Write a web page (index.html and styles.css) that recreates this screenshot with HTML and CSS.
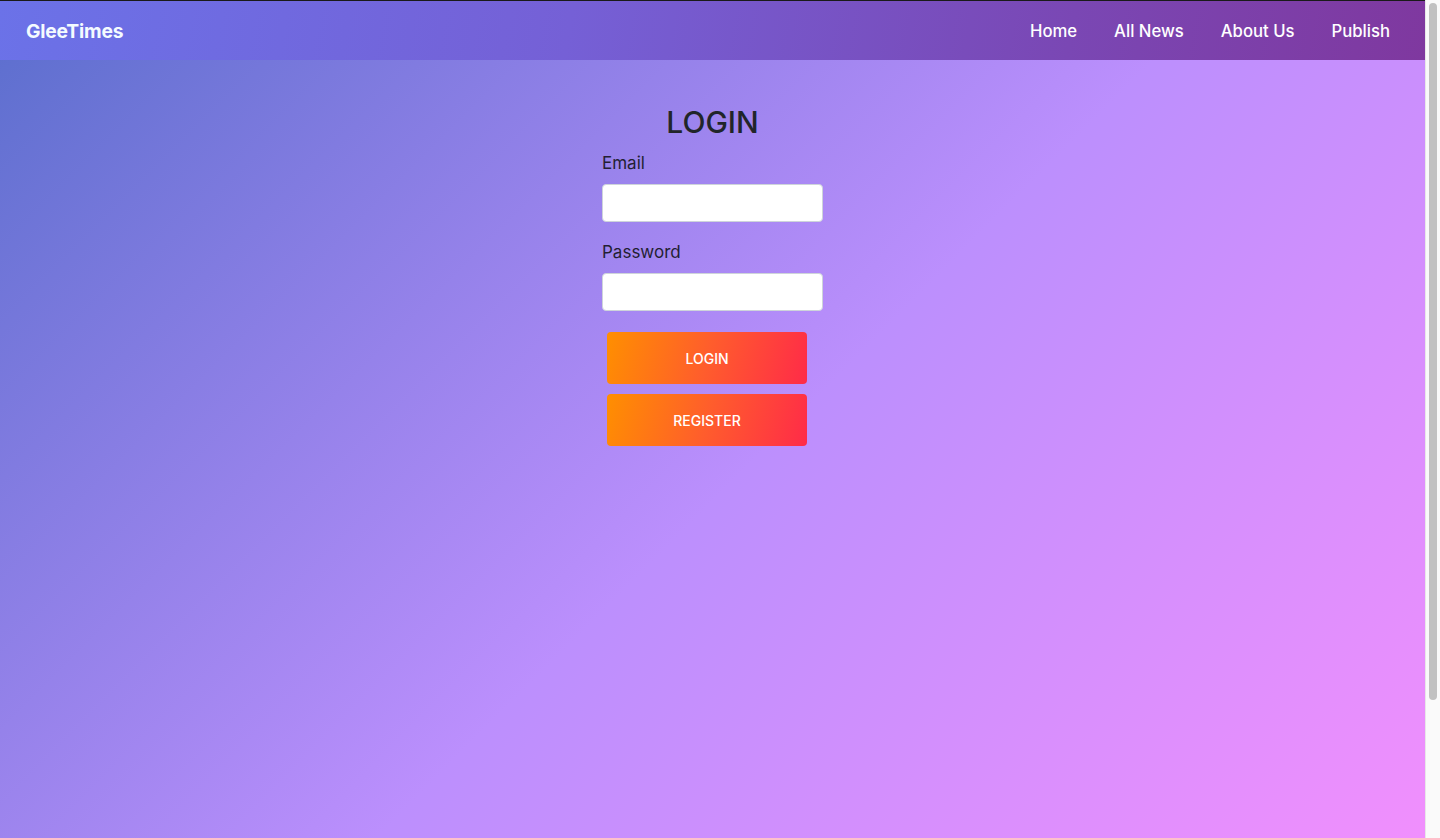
FILE: index.html
```html
<!DOCTYPE html>
<html lang="en">
<head>
<meta charset="utf-8">
<title>GleeTimes - Login</title>
<link rel="stylesheet" href="styles.css">
</head>
<body>
<div class="page">
  <nav class="navbar">
    <a class="brand" href="#">GleeTimes</a>
    <ul class="nav-links">
      <li><a href="#">Home</a></li>
      <li><a href="#">All News</a></li>
      <li><a href="#">About Us</a></li>
      <li><a href="#">Publish</a></li>
    </ul>
  </nav>
  <main class="login">
    <h1 class="login-title">LOGIN</h1>
    <form class="login-form">
      <label class="field-label" for="email">Email</label>
      <input class="field-input" id="email" type="email">
      <label class="field-label field-label-second" for="password">Password</label>
      <input class="field-input" id="password" type="password">
      <div class="actions">
        <button class="btn" type="button">LOGIN</button>
        <button class="btn" type="button">REGISTER</button>
      </div>
    </form>
  </main>
</div>
<div class="scrollbar" aria-hidden="true">
  <div class="scrollbar-thumb"></div>
</div>
</body>
</html>
```

FILE: styles.css
```css
html {
  margin: 0;
}

body {
  margin: 0;
  display: flex;
  align-items: flex-start;
  font-family: Inter, "Noto Sans", "Liberation Sans", sans-serif;
  color: #212529;
  background: #fafafa;
}

.page {
  flex: 1;
  min-height: 1005px;
  background: linear-gradient(135deg, #5a6ecd 0%, #bc8ffd 50%, #f98ffd 100%);
}

.scrollbar {
  position: sticky;
  top: 0;
  box-sizing: border-box;
  width: 15px;
  height: 100vh;
  flex: none;
  background: #fafafa;
  border-left: 1px solid #e8e8e8;
  padding: 3px 3px 0 3px;
}

.scrollbar-thumb {
  height: 697px;
  border-radius: 4px;
  background: #c1c1c1;
}

.navbar {
  box-sizing: border-box;
  height: 60px;
  border-top: 1px solid #1a1a1a;
  display: flex;
  align-items: center;
  justify-content: space-between;
  padding: 0 35px 0 26px;
  background: linear-gradient(100deg, #6b72e8 0%, #7560d6 40%, #7a47b4 75%, #7f389f 100%);
}

.brand {
  color: #f4fbff;
  font-weight: 700;
  font-size: 19.3px;
  text-decoration: none;
  letter-spacing: -0.2px;
}

.nav-links {
  list-style: none;
  margin: 0;
  padding: 0;
  display: flex;
  gap: 37px;
}

.nav-links a {
  color: #ffffff;
  font-size: 16.7px;
  font-weight: 500;
  text-decoration: none;
}

.login {
  padding-top: 44px;
  display: flex;
  flex-direction: column;
  align-items: center;
}

.login-title {
  margin: 0;
  font-size: 30px;
  line-height: 36px;
  font-weight: 500;
  color: #212529;
}

.login-form {
  width: 221px;
  margin-top: 11px;
  display: flex;
  flex-direction: column;
}

.field-label {
  font-size: 17px;
  line-height: 24px;
  margin-bottom: 9px;
  color: #231f33;
}

.field-label-second {
  margin-top: 18px;
}

.field-input {
  box-sizing: border-box;
  width: 221px;
  height: 38px;
  border: 1px solid #ced4da;
  border-radius: 4px;
  background: #ffffff;
  padding: 6px 12px;
  font-size: 16px;
  font-family: inherit;
}

.actions {
  margin-top: 21px;
  padding-left: 5px;
  display: flex;
  flex-direction: column;
  gap: 10px;
}

.btn {
  width: 200px;
  height: 52px;
  border: none;
  border-radius: 4px;
  background: linear-gradient(105deg, #ff8f00 0%, #ff5d2c 50%, #ff2b48 100%);
  color: #ffffff;
  font-family: inherit;
  font-size: 14px;
  font-weight: 500;
  cursor: pointer;
}
```
